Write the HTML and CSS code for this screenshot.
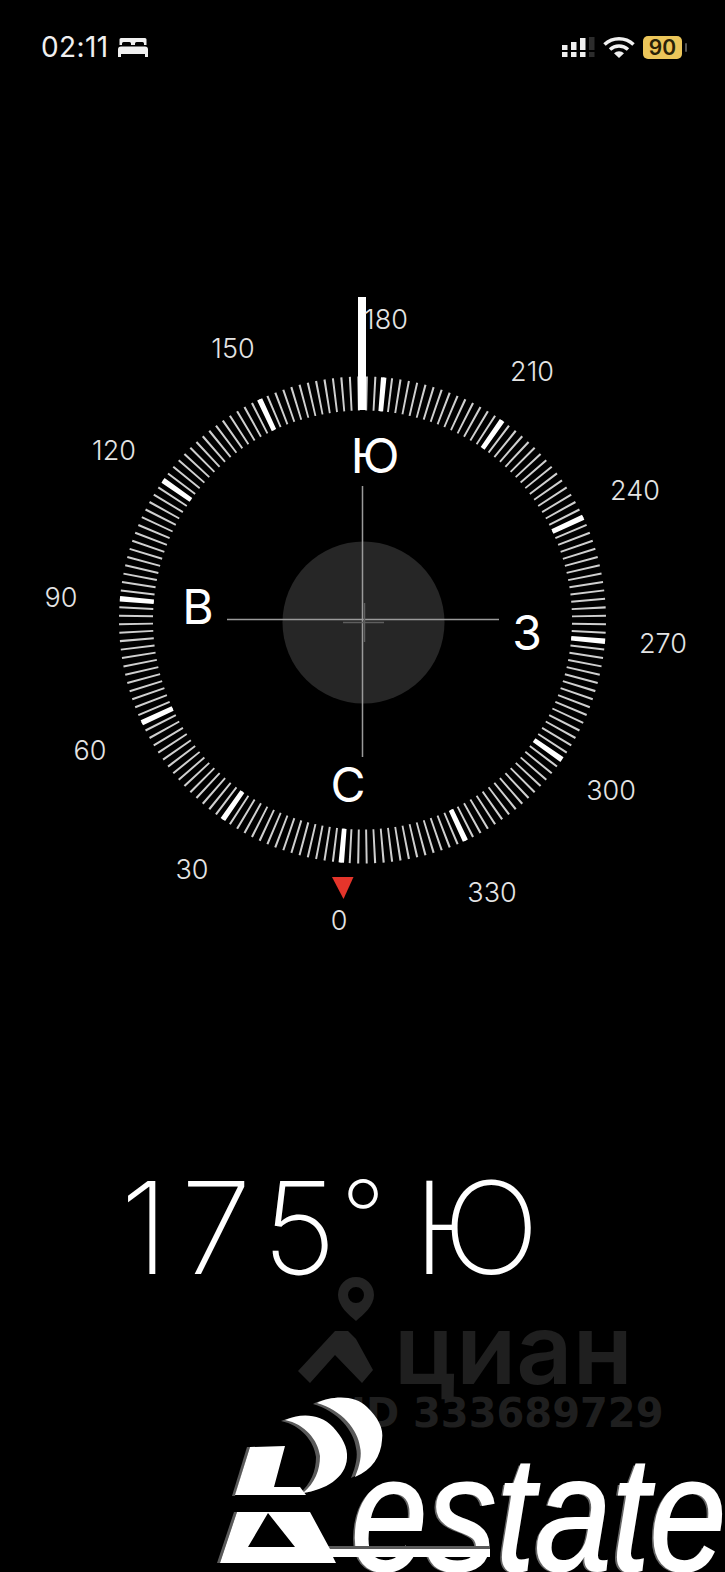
FILE: index.html
```html
<!DOCTYPE html>
<html lang="ru">
<head>
    <meta charset="UTF-8">
    <meta name="viewport" content="width=device-width, initial-scale=1.0">
    <title>Compass</title>
    <link rel="stylesheet" href="styles.css">
</head>
<body>
    <div class="screen">
        <header class="status-bar">
            <div class="status-left">
                <span class="status-time">02:11</span>
                <svg class="icon-bed" viewBox="0 0 30 20">
                    <path d="M3 1h24a1.500 1.500 0 0 1 1.500 1.500V8H26V6.500a1.500 1.500 0 0 0-1.500-1.500h-6a1.500 1.500 0 0 0-1.500 1.500V8h-4V6.500a1.500 1.500 0 0 0-1.500-1.500h-6A1.500 1.500 0 0 0 4 6.500V8H1.500V2.500A1.500 1.500 0 0 1 3 1z"/>
                    <path d="M3 9.500h24a3 3 0 0 1 3 3V17H0v-4.500a3 3 0 0 1 3-3z"/>
                    <rect x="0" y="17" width="3" height="3"/>
                    <rect x="27" y="17" width="3" height="3"/>
                </svg>
            </div>
            <div class="status-right">
                <svg class="icon-signal" viewBox="0 0 33 20">
                    <rect x="0" y="8" width="5.500" height="5"/><rect x="0" y="15" width="5.500" height="5"/>
                    <rect x="9" y="5" width="5.500" height="8"/><rect x="9" y="15" width="5.500" height="5"/>
                    <rect x="18" y="1" width="5.500" height="12"/><rect x="18" y="15" width="5.500" height="5"/>
                    <rect class="icon-signal__off" x="27" y="0" width="5.500" height="13"/><rect class="icon-signal__off" x="27" y="15" width="5.500" height="5"/>
                </svg>
                <svg class="icon-wifi" viewBox="0 0 32 22">
                    <path d="M1.500 8.500a21 21 0 0 1 29 0"/>
                    <path d="M7 13.500a13.500 13.500 0 0 1 18 0"/>
                    <path class="icon-wifi__dot" d="M11 17.200a7.500 7.500 0 0 1 10 0L16 22z"/>
                </svg>
                <div class="battery">
                    <span class="battery__level">90</span>
                    <span class="battery__nub"></span>
                </div>
            </div>
        </header>

        <svg class="compass" viewBox="0 270 725 680">
            <circle class="dial-minor" cx="362.500" cy="620" r="226.500" pathLength="360" transform="rotate(5 362.500 620)"/>
            <circle class="dial-major" cx="362.500" cy="620" r="226.500" pathLength="360" transform="rotate(5 362.500 620)"/>
            <rect class="needle" x="358" y="297" width="8" height="113"/>

            <circle class="level-disc" cx="363.500" cy="622.500" r="81"/>
            <line class="cross" x1="362.500" y1="486" x2="362.500" y2="757"/>
            <line class="cross" x1="227" y1="619.500" x2="499" y2="619.500"/>
            <line class="cross-bubble" x1="343" y1="622.500" x2="384" y2="622.500"/>
            <line class="cross-bubble" x1="364.500" y1="603" x2="364.500" y2="642"/>

            <polygon class="marker" points="332,877 353.500,877 343.500,899"/>

            <text class="deg" x="386" y="329">180</text>
            <text class="deg" x="233" y="358">150</text>
            <text class="deg" x="532" y="381">210</text>
            <text class="deg" x="114" y="460">120</text>
            <text class="deg" x="635" y="500">240</text>
            <text class="deg" x="61" y="607">90</text>
            <text class="deg" x="663" y="653">270</text>
            <text class="deg" x="90" y="760">60</text>
            <text class="deg" x="611" y="800">300</text>
            <text class="deg" x="192" y="879">30</text>
            <text class="deg" x="492" y="902">330</text>
            <text class="deg" x="339" y="930">0</text>

            <text class="cardinal" x="375" y="473">Ю</text>
            <text class="cardinal" x="198" y="624">В</text>
            <text class="cardinal" x="527" y="650">З</text>
            <text class="cardinal" x="348" y="802">С</text>
        </svg>

        <div class="heading"><span class="heading__num">175</span><span class="heading__deg">°</span> Ю</div>

        <div class="watermark">
            <svg class="watermark__mark" viewBox="0 0 76 108">
                <path fill-rule="evenodd" d="M58 0a18 18 0 0 1 18 18c0 11-11 20-18 26-7-6-18-15-18-26A18 18 0 0 1 58 0zm0 10a8 8 0 1 0 0 16 8 8 0 0 0 0-16z"/>
                <polygon points="37,54 50,54 58,62 75,93 64,106 37,78 12,106 0,94"/>
            </svg>
            <span class="watermark__name">циан</span>
            <span class="watermark__id">ID 333689729</span>
        </div>

        <div class="logo">
            <span class="logo__text">estate</span>
            <svg class="logo__mark" viewBox="215 1395 175 177">
                <path class="logo__shade" d="M313 1404C326 1397 351 1395 363 1408C374 1419 380 1429 378 1441C377 1457 368 1471 351 1478C356 1466 358 1456 356 1448C354 1431 338 1411 313 1404z"/>
                <path class="logo__fill" d="M317 1403C330 1396 355 1394 367 1407C378 1418 384 1428 382 1440C381 1456 372 1470 355 1477C360 1465 362 1455 360 1447C358 1430 342 1410 317 1403z"/>
                <path class="logo__shade" d="M281 1421C296 1414 316 1414 329 1428C338 1438 344 1448 343 1459C342 1479 321 1491 299 1494C311 1484 316 1471 316 1457C314 1441 301 1425 281 1421z"/>
                <path class="logo__fill" d="M285 1420C300 1413 320 1413 333 1427C342 1437 348 1447 347 1458C346 1478 325 1490 303 1493C315 1483 320 1470 320 1456C318 1440 305 1424 285 1420z"/>
                <polygon class="logo__shade" points="247,1447 250,1447 235,1496 232,1496"/>
                <polygon class="logo__fill" points="250,1447 285,1446 274,1487 300,1487 306,1495 235,1495"/>
                <polygon class="logo__shade" points="234,1512 237,1512 220,1563 217,1563"/>
                <path class="logo__shade" d="M328 1546h162v3H328z"/>
                <path class="logo__fill" fill-rule="evenodd" d="M237 1512h73l20 37h160v8H333l3 6H220zm31 1l-20 34h47z"/>
            </svg>
        </div>
    </div>
</body>
</html>
```

FILE: styles.css
```css
*, *::before, *::after {
    box-sizing: border-box;
}
body { margin: 0; padding: 0; background: #000; font-family: Inter, "Liberation Sans", sans-serif; }
.screen {
    position: relative;
    display: flex;
    flex-direction: column;
    width: 725px;
    height: 1572px;
    overflow: hidden;
    background: #000;
    color: #fff;
}

/* status bar */
.status-bar {
    display: flex;
    align-items: center;
    justify-content: space-between;
    height: 94px;
    padding: 0 38px 0 41px;
}
.status-left { display: flex; align-items: center; gap: 9px; }
.status-time { font-size: 28px; font-weight: 400; color: #f0f0f0; letter-spacing: 0.4px; }
.status-right { display: flex; align-items: center; }
.icon-bed { width: 30px; height: 20px; fill: #f0f0f0; }
.icon-signal { width: 33px; height: 20px; margin-right: 8px; fill: #f0f0f0; }
.icon-signal__off { fill: #2c2c2c; }
.icon-wifi { width: 32px; height: 22px; margin-right: 8px; fill: none; stroke: #f0f0f0; stroke-width: 3.500; }
.icon-wifi__dot { fill: #f0f0f0; stroke: none; }
.battery { display: flex; align-items: center; gap: 3px; }
.battery__level {
    width: 39px;
    height: 23px;
    border-radius: 5px;
    background: #ecc65a;
    color: #2a2208;
    font-size: 21px;
    font-weight: 600;
    line-height: 23px;
    text-align: center;
}
.battery__nub { width: 2px; height: 9px; border-radius: 1px; background: #555; }

/* compass dial */
.compass { display: block; width: 725px; height: 680px; margin-top: 176px; flex: none; }
.dial-minor {
    fill: none;
    stroke: #cfcfcf;
    stroke-width: 34;
    stroke-dasharray: 0.500 1.500;
    stroke-dashoffset: 0.250;
}
.dial-major {
    fill: none;
    stroke: #fff;
    stroke-width: 34;
    stroke-dasharray: 1.300 28.700;
    stroke-dashoffset: 0.650;
}
.needle { fill: #fff; }
.level-disc { fill: #262626; }
.cross { stroke: #9a9a9a; stroke-width: 1.500; }
.cross-bubble { stroke: #5e5e5e; stroke-width: 1.500; }
.marker { fill: #e5352b; }
.deg { font-size: 27px; font-weight: 300; fill: #e4e4e4; text-anchor: middle; }
.cardinal { font-size: 48px; font-weight: 400; fill: #fff; text-anchor: middle; }

/* reading */
.heading {
    margin-top: 203px;
    padding-left: 120px;
    font-size: 128px;
    font-weight: 250;
    line-height: 150px;
    white-space: nowrap;
}
.heading__num { letter-spacing: 12px; }
.heading__deg { margin-left: -7px; margin-right: -8px; font-size: 96px; vertical-align: 24px; line-height: 0; }

/* overlays at the bottom */
.watermark {
    position: absolute;
    left: 298px;
    top: 1277px;
    width: 380px;
    height: 150px;
    color: #1f1f1f;
}
.watermark__mark { position: absolute; left: 0; top: 0; width: 76px; height: 108px; fill: #242424; }
.watermark__name {
    position: absolute;
    left: 96px;
    top: 17px;
    font-size: 98px;
    font-weight: 600;
    line-height: 110px;
}
.watermark__id {
    position: absolute;
    left: 53px;
    top: 113px;
    font-family: "DejaVu Sans", sans-serif;
    font-size: 40px;
    font-weight: 700;
    line-height: 46px;
    white-space: nowrap;
}
.logo { position: absolute; left: 215px; top: 1395px; width: 510px; height: 177px; }
.logo__text {
    position: absolute;
    left: 136px;
    top: 27px;
    font-family: "Liberation Sans", sans-serif;
    font-size: 164px;
    font-style: italic;
    line-height: 184px;
    -webkit-text-stroke: 2px #fff;
    text-shadow: -3px 1px 0 #666;
    transform: scaleX(0.84);
    transform-origin: left top;
    white-space: nowrap;
}
.logo__mark { position: absolute; left: 0; top: 0; width: 175px; height: 177px; overflow: visible; }
.logo__fill { fill: #fff; }
.logo__shade { fill: #5a5a5a; }
```
